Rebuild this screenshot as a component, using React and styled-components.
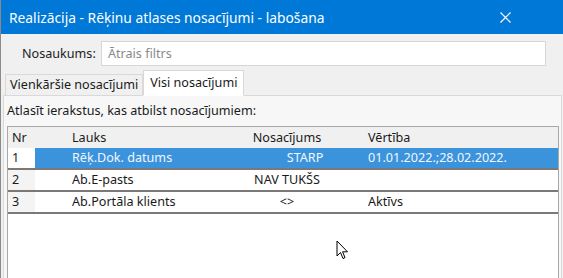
import styled, { createGlobalStyle } from 'styled-components'

const Global = createGlobalStyle`
  body {
    margin: 0;
    background: #f0f0f0;
    font-family: "Noto Sans", "Open Sans", sans-serif;
  }
`

const Window = styled.div`
  width: 563px;
  height: 278px;
  display: flex;
  flex-direction: column;
  overflow: hidden;
  position: relative;
  background: #f0f0f0;
  box-sizing: border-box;
  border-left: 1px solid #8a8a8a;
`
const TitleBar = styled.div`
  height: 34px;
  flex: none;
  background: #0078d7;
  color: #fff;
  display: flex;
  align-items: center;
  justify-content: space-between;
  padding: 0 0 0 8px;
  font-size: 13.8px;
`
const CloseBtn = styled.div`
  width: 46px;
  height: 34px;
  display: flex;
  align-items: center;
  justify-content: center;
  margin-right: 35px;
`
const Body = styled.div`
  flex: 1;
  display: flex;
  flex-direction: column;
  padding: 7px 1px 0 2px;
  font-size: 12.6px;
  line-height: 16px;
  color: #1a1a1a;
`
const FilterRow = styled.div`
  display: flex;
  align-items: center;
  height: 25px;
  gap: 6px;
  padding-left: 19px;
  padding-right: 16px;
`
const Label = styled.label`
  width: 73px;
  color: #222;
`
const Input = styled.div`
  flex: 1;
  height: 25px;
  box-sizing: border-box;
  border: 1px solid #d6d6d6;
  background: #fff;
  display: flex;
  align-items: center;
  padding-left: 6px;
  color: #8a8a8a;
`
const Tabs = styled.div`
  display: flex;
  align-items: flex-end;
  margin-top: 4px;
  padding-left: 2px;
  height: 26px;
  position: relative;
  z-index: 1;
`
const Tab = styled.div`
  height: ${p => (p.active ? '26px' : '22px')};
  box-sizing: border-box;
  padding: 0 ${p => (p.active ? '6px' : '4px')};
  display: flex;
  align-items: center;
  background: ${p => (p.active ? '#fff' : '#f0f0f0')};
  border: 1px solid #d9d9d9;
  border-bottom: ${p => (p.active ? '1px solid #fff' : '1px solid #d9d9d9')};
  color: #1a1a1a;
`
const Panel = styled.div`
  flex: 1;
  margin-top: -1px;
  border: 1px solid #d9d9d9;
  border-bottom: none;
  background: #f7f7f7;
  display: flex;
  flex-direction: column;
  padding: 6px 2px 0 3px;
`
const Caption = styled.div`
  height: 18px;
  display: flex;
  align-items: center;
  color: #1a1a1a;
`
const Grid = styled.div`
  flex: 1;
  margin-top: 6px;
  background: #fff;
  border: 1px solid #a8a8a8;
  border-bottom: none;
`
const Row = styled.div`
  display: grid;
  grid-template-columns: 27px 170px 160px 1fr;
  height: ${p => (p.head ? '21px' : '20px')};
  align-items: stretch;
  border-bottom: ${p => (p.head ? 'none' : '2px solid #7d7878')};
  background: ${p => (p.head ? '#f0f0f0' : '#fff')};
`
const Cell = styled.div`
  display: flex;
  align-items: center;
  padding-left: ${p => p.pad || '4px'};
  justify-content: ${p => (p.center ? 'center' : 'flex-start')};
  background: ${p => (p.sel ? '#3b93dc' : p.nr ? '#f4f4f4' : 'transparent')};
  color: ${p => (p.sel ? '#f2f7ff' : '#1a1a1a')};
  white-space: nowrap;
`
const Cursor = styled.svg`
  position: absolute;
  left: 335px;
  top: 240px;
`

const rows = [
  { nr: '1', field: 'Rēķ.Dok. datums', cond: 'STARP', value: '01.01.2022.;28.02.2022.', sel: true },
  { nr: '2', field: 'Ab.E-pasts', cond: 'NAV TUKŠS', value: '' },
  { nr: '3', field: 'Ab.Portāla klients', cond: '<>', value: 'Aktīvs' },
]

const App = () => {
  return (
    <Window>
      <Global />
      <TitleBar>
        <span>Realizācija - Rēķinu atlases nosacījumi - labošana</span>
        <CloseBtn>
          <svg width="11" height="11" viewBox="0 0 11 11">
            <path d="M0.5 0.5L10.5 10.5M10.5 0.5L0.5 10.5" stroke="#fff" strokeWidth="1.2" />
          </svg>
        </CloseBtn>
      </TitleBar>
      <Body>
        <FilterRow>
          <Label>Nosaukums:</Label>
          <Input>Ātrais filtrs</Input>
        </FilterRow>
        <Tabs>
          <Tab>Vienkāršie nosacījumi</Tab>
          <Tab active>Visi nosacījumi</Tab>
        </Tabs>
        <Panel>
          <Caption>Atlasīt ierakstus, kas atbilst nosacījumiem:</Caption>
          <Grid>
            <Row head>
              <Cell>Nr</Cell>
              <Cell pad="37px">Lauks</Cell>
              <Cell center>Nosacījums</Cell>
              <Cell pad="3px">Vērtība</Cell>
            </Row>
            {rows.map(r => (
              <Row key={r.nr}>
                <Cell nr={!r.sel}>{r.nr}</Cell>
                <Cell sel={r.sel} pad="37px">{r.field}</Cell>
                <Cell sel={r.sel} center pad={r.sel ? '40px' : '4px'}>{r.cond}</Cell>
                <Cell sel={r.sel} pad="3px">{r.value}</Cell>
              </Row>
            ))}
          </Grid>
        </Panel>
      </Body>
      <Cursor width="13" height="20" viewBox="0 0 13 20">
        <path d="M1 1L1 16L4.5 12.5L7 18.5L9 17.6L6.6 11.8L11.5 11.8Z" fill="#fff" stroke="#000" strokeWidth="1" strokeLinejoin="round" />
      </Cursor>
    </Window>
  )
}

export default App
